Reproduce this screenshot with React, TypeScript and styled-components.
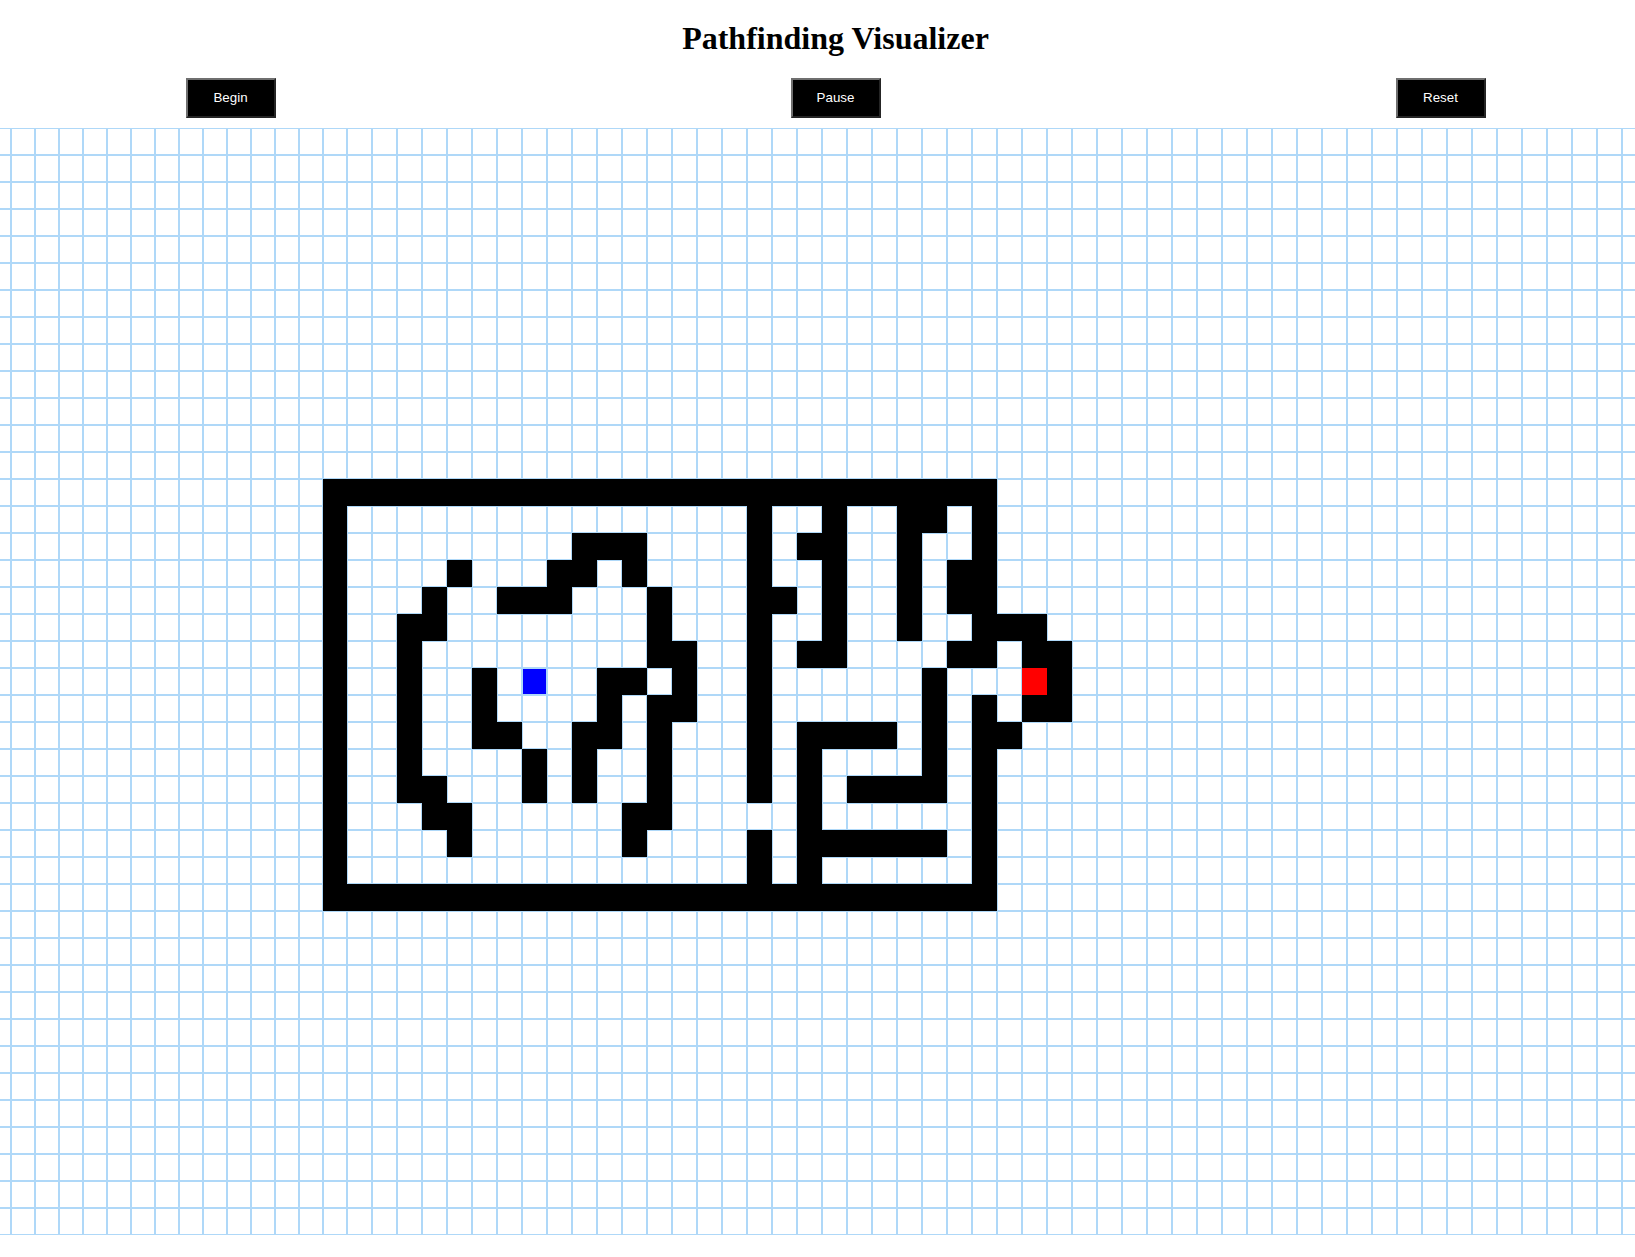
import React from "react";
import styled, { createGlobalStyle } from "styled-components";

const GlobalStyle = createGlobalStyle`
  html, body {
    margin: 0;
    padding: 0;
    background: #ffffff;
  }
  body {
    font-family: "Liberation Serif", "Times New Roman", serif;
  }
`;

type Kind = "empty" | "wall" | "start" | "end";

const ROWS = 41;
const NARROW_COLS = 15; // 24px columns (first one is partly off-screen)
const WIDE_COLS = 52; // 25px columns
const COLS = NARROW_COLS + WIDE_COLS;
// column index k used below is the visible column number; array index = k + 1
const START = { row: 20, col: 21 };
const END = { row: 20, col: 41 };

const WALL_SPANS: Record<number, Array<[number, number]>> = {
  13: [[13, 39]],
  14: [[13, 13], [30, 30], [33, 33], [36, 37], [39, 39]],
  15: [[13, 13], [23, 25], [30, 30], [32, 33], [36, 36], [39, 39]],
  16: [[13, 13], [18, 18], [22, 23], [25, 25], [30, 30], [33, 33], [36, 36], [38, 39]],
  17: [[13, 13], [17, 17], [20, 22], [26, 26], [30, 31], [33, 33], [36, 36], [38, 39]],
  18: [[13, 13], [16, 17], [26, 26], [30, 30], [33, 33], [36, 36], [39, 41]],
  19: [[13, 13], [16, 16], [26, 27], [30, 30], [32, 33], [38, 39], [41, 42]],
  20: [[13, 13], [16, 16], [19, 19], [24, 25], [27, 27], [30, 30], [37, 37], [42, 42]],
  21: [[13, 13], [16, 16], [19, 19], [24, 24], [26, 27], [30, 30], [37, 37], [39, 39], [41, 42]],
  22: [[13, 13], [16, 16], [19, 20], [23, 24], [26, 26], [30, 30], [32, 35], [37, 37], [39, 40]],
  23: [[13, 13], [16, 16], [21, 21], [23, 23], [26, 26], [30, 30], [32, 32], [37, 37], [39, 39]],
  24: [[13, 13], [16, 17], [21, 21], [23, 23], [26, 26], [30, 30], [32, 32], [34, 37], [39, 39]],
  25: [[13, 13], [17, 18], [25, 26], [32, 32], [39, 39]],
  26: [[13, 13], [18, 18], [25, 25], [30, 30], [32, 37], [39, 39]],
  27: [[13, 13], [30, 30], [32, 32], [39, 39]],
  28: [[13, 39]],
};

const kindAt = (row: number, col: number): Kind => {
  if (row === START.row && col === START.col) return "start";
  if (row === END.row && col === END.col) return "end";
  const spans = WALL_SPANS[row];
  if (spans && spans.some(([a, b]) => col >= a && col <= b)) return "wall";
  return "empty";
};

const FILL: Record<Kind, string> = {
  empty: "#ffffff",
  wall: "#000000",
  start: "#0000ff",
  end: "#ff0000",
};

const EDGE: Record<Kind, string> = {
  empty: "rgb(175, 216, 248)",
  wall: "#000000",
  start: "rgb(175, 216, 248)",
  end: "#ff0000",
};

const Page = styled.div`
  width: 100%;
  min-height: 1257px;
  overflow: hidden;
`;

const Header = styled.header`
  width: 1671px;
  display: flex;
  flex-direction: column;
  align-items: center;
`;

const Title = styled.h1`
  margin: 0;
  padding-top: 20px;
  font-family: "Liberation Serif", "Times New Roman", serif;
  font-weight: 700;
  font-size: 32px;
  line-height: 37px;
  color: #000000;
`;

const Toolbar = styled.div`
  margin-top: 21px;
  display: flex;
  justify-content: center;
  gap: 515px;
`;

const ControlButton = styled.button`
  box-sizing: border-box;
  width: 90px;
  height: 40px;
  padding: 0 0 2px 0;
  background: #000000;
  color: #ffffff;
  font-family: "Liberation Sans", Arial, sans-serif;
  font-size: 13.333px;
  border-width: 2px;
  border-style: solid;
  border-color: #6f6f6f #252525 #252525 #6f6f6f;
  cursor: pointer;
`;

const Board = styled.div`
  margin-top: 10px;
  margin-left: -13px;
  display: grid;
  grid-template-columns: repeat(${NARROW_COLS}, 24px) repeat(${WIDE_COLS}, 25px);
  grid-auto-rows: 27px;
  width: max-content;
`;

const Cell = styled.div<{ $kind: Kind }>`
  box-sizing: border-box;
  border: 1px solid ${(p) => EDGE[p.$kind]};
  background: ${(p) => FILL[p.$kind]};
`;

export default function App() {
  const cells: React.ReactNode[] = [];
  for (let r = 0; r < ROWS; r++) {
    for (let i = 0; i < COLS; i++) {
      const k = i - 1;
      cells.push(<Cell key={`${r}-${i}`} $kind={kindAt(r, k)} />);
    }
  }
  return (
    <Page>
      <GlobalStyle />
      <Header>
        <Title>Pathfinding Visualizer</Title>
        <Toolbar>
          <ControlButton>Begin</ControlButton>
          <ControlButton>Pause</ControlButton>
          <ControlButton>Reset</ControlButton>
        </Toolbar>
      </Header>
      <Board>{cells}</Board>
    </Page>
  );
}
